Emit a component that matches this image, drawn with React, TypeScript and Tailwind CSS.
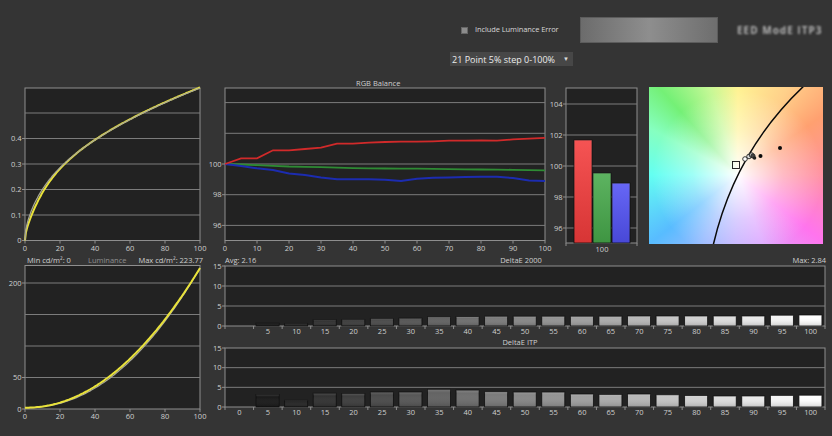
import React from "react";

const FONT = "'Open Sans', 'Noto Sans', sans-serif";
const GRID = "#7c7c7c";
const FRAME = "#8e8e8e";
const PLOT = "#222222";
const LABEL = "#cfcfcf";

const STEPS = Array.from({ length: 21 }, (_, i) => i * 5);

type Pt = [number, number];

function toPath(pts: Pt[]) {
  return pts.map((p, i) => `${i ? "L" : "M"}${p[0].toFixed(1)},${p[1].toFixed(1)}`).join(" ");
}

// shared pieces of every plot: frame, grid lines, tick labels
function Frame({
  x0, x1, y0, y1, grids, yLabels, xLabels, xLabelY, ticksX,
}: {
  x0: number; x1: number; y0: number; y1: number;
  grids: number[];
  yLabels: { y: number; t: string }[];
  xLabels: { x: number; t: string }[];
  xLabelY: number;
  ticksX?: number[];
}) {
  return (
    <g>
      <rect x={x0} y={y0} width={x1 - x0} height={y1 - y0} fill={PLOT} stroke={FRAME} strokeWidth={1} />
      {grids.map((y) => (
        <line key={y} x1={x0} x2={x1} y1={y} y2={y} stroke={GRID} strokeWidth={1} />
      ))}
      {yLabels.map((l) => (
        <g key={l.t}>
          <line x1={x0 - 3} x2={x0} y1={l.y} y2={l.y} stroke={FRAME} />
          <text x={x0 - 3.5} y={l.y + 2.7} textAnchor="end" fontSize={7.5} fill={LABEL}>{l.t}</text>
        </g>
      ))}
      {(ticksX ?? xLabels.map((l) => l.x)).map((x, i) => (
        <line key={i} x1={x} x2={x} y1={y1} y2={y1 + 3} stroke={FRAME} />
      ))}
      {xLabels.map((l) => (
        <text key={l.t} x={l.x} y={xLabelY} textAnchor="middle" fontSize={7.5} fill={LABEL}>{l.t}</text>
      ))}
    </g>
  );
}

const tens = [0, 20, 40, 60, 80, 100];

function GammaChart() {
  const X = (d: number) => 25 + d * 1.75;
  const Y = (v: number) => 240.5 - v * 255;
  const law = (d: number) => 0.6 * Math.pow(d / 100, 0.4545);
  const yellow = (d: number) => law(d) * (1 - 0.45 * Math.exp(-d / 7));
  const gray = (d: number) => law(d) * (1 - 0.22 * Math.exp(-d / 6)) * 0.997;
  const ds = Array.from({ length: 201 }, (_, i) => i / 2);
  return (
    <svg width={212} height={177} viewBox="0 78 212 177" fontFamily={FONT}>
      <Frame
        x0={25} x1={200} y0={88} y1={240.5}
        grids={[0.1, 0.2, 0.3, 0.4, 0.5].map(Y)}
        yLabels={[{ y: Y(0), t: "0" }, { y: Y(0.1), t: "0.1" }, { y: Y(0.2), t: "0.2" }, { y: Y(0.3), t: "0.3" }, { y: Y(0.4), t: "0.4" }]}
        xLabels={tens.map((d) => ({ x: X(d), t: String(d) }))}
        xLabelY={250.5}
      />
      <path d={toPath(ds.map((d) => [X(d), Y(yellow(d))]))} fill="none" stroke="#e9e23a" strokeWidth={2} />
      <path d={toPath(ds.map((d) => [X(d), Y(gray(d))]))} fill="none" stroke="#a8a898" strokeWidth={1.2} />
    </svg>
  );
}

function LuminanceChart() {
  const X = (d: number) => 25 + d * 1.75;
  const Y = (v: number) => 409 - v * 0.63;
  const ds = Array.from({ length: 101 }, (_, i) => i);
  const yellow = (d: number) => 2 + 221.77 * Math.pow(d / 100, 2.05);
  const gray = (d: number) => 2 + 221.77 * Math.pow(d / 100, 2.14);
  return (
    <svg width={212} height={181} viewBox="0 255 212 181" fontFamily={FONT}>
      <text x={27} y={262.5} fontSize={7.5} fill={LABEL}>Min cd/m²: 0</text>
      <text x={88} y={262.5} fontSize={7.5} fill="#8f8f8f">Luminance</text>
      <text x={203} y={262.5} fontSize={7.5} fill={LABEL} textAnchor="end">Max cd/m²: 223.77</text>
      <Frame
        x0={25} x1={200} y0={265.5} y1={409}
        grids={[50, 100, 150, 200].map(Y)}
        yLabels={[{ y: Y(0), t: "0" }, { y: Y(50), t: "50" }, { y: Y(200), t: "200" }]}
        xLabels={tens.map((d) => ({ x: X(d), t: String(d) }))}
        xLabelY={419}
      />
      <path d={toPath(ds.map((d) => [X(d), Y(gray(d))]))} fill="none" stroke="#a8a898" strokeWidth={1.2} />
      <path d={toPath(ds.map((d) => [X(d), Y(yellow(d))]))} fill="none" stroke="#e9e23a" strokeWidth={2} />
    </svg>
  );
}

const RED = [100, 100.37, 100.37, 100.89, 100.89, 100.98, 101.06, 101.32, 101.32, 101.39, 101.43, 101.45, 101.46, 101.48, 101.52, 101.52, 101.54, 101.52, 101.6, 101.65, 101.71];
const GREEN = [100, 99.97, 99.93, 99.88, 99.84, 99.82, 99.8, 99.76, 99.73, 99.72, 99.71, 99.7, 99.7, 99.68, 99.66, 99.65, 99.64, 99.63, 99.62, 99.6, 99.59];
const BLUE = [100, 99.86, 99.72, 99.61, 99.39, 99.28, 99.13, 99.0, 99.0, 99.0, 98.98, 98.9, 99.04, 99.1, 99.12, 99.15, 99.17, 99.17, 99.08, 98.92, 98.9];

function RgbBalance() {
  const X = (d: number) => 225 + d * 3.2;
  const Y = (v: number) => 164 - (v - 100) * 15.35;
  const line = (vals: number[]) => toPath(vals.map((v, i) => [X(STEPS[i]), Y(v)]));
  return (
    <svg width={336} height={177} viewBox="212 78 336 177" fontFamily={FONT} className="overflow-visible">
      <text x={356} y={85.5} fontSize={7.5} fill={LABEL}>RGB Balance</text>
      <Frame
        x0={225} x1={545} y0={88} y1={240.5}
        grids={[104, 102, 100, 98, 96].map(Y)}
        yLabels={[{ y: Y(100), t: "100" }, { y: Y(98), t: "98" }, { y: Y(96), t: "96" }]}
        xLabels={Array.from({ length: 11 }, (_, i) => ({ x: X(i * 10), t: String(i * 10) }))}
        xLabelY={251}
      />
      <path d={line(GREEN)} fill="none" stroke="#2e8b34" strokeWidth={1.8} />
      <path d={line(BLUE)} fill="none" stroke="#1c2cb0" strokeWidth={2} />
      <path d={line(RED)} fill="none" stroke="#d12a2a" strokeWidth={1.8} />
    </svg>
  );
}

function RgbBars() {
  const Y = (v: number) => 166 - (v - 100) * 15.5;
  const bars = [
    { x: 574, v: 101.68, c: "#f43c3c" },
    { x: 593, v: 99.55, c: "#47a94b" },
    { x: 612, v: 98.9, c: "#5252f4" },
  ];
  return (
    <svg width={92} height={177} viewBox="548 78 92 177" fontFamily={FONT}>
      <defs>
        <linearGradient id="barSheen" x1="0" y1="0" x2="0" y2="1">
          <stop offset="0" stopColor="#fff" stopOpacity="0.12" />
          <stop offset="1" stopColor="#000" stopOpacity="0.12" />
        </linearGradient>
      </defs>
      <Frame
        x0={566} x1={637} y0={88} y1={243}
        grids={[104, 102, 100, 98, 96].map(Y)}
        yLabels={[104, 102, 100, 98, 96].map((v) => ({ y: Y(v), t: String(v) }))}
        xLabels={[{ x: 602, t: "100" }]}
        xLabelY={252}
        ticksX={[566, 637]}
      />
      {bars.map((b) => (
        <g key={b.x}>
          <rect x={b.x} y={Y(b.v)} width={18} height={243 - Y(b.v)} fill={b.c} stroke="#111" strokeWidth={0.8} />
          <rect x={b.x} y={Y(b.v)} width={18} height={243 - Y(b.v)} fill="url(#barSheen)" />
        </g>
      ))}
    </svg>
  );
}

function Chromaticity() {
  return (
    <div className="pt-[9px] pl-[9px]">
      <div className="relative w-[174px] h-[157px] bg-[image:radial-gradient(ellipse_farthest-corner_at_51%_56%,#ffffff_0%,#ffffffc8_12%,#ffffff60_36%,#ffffff00_68%),conic-gradient(from_0deg_at_51%_56%,#fff394,#ffd08a_30deg,#ffa070_55deg,#ff92a2_90deg,#ff74ee_128deg,#dca6ff_160deg,#c2b0ff_182deg,#96baff_208deg,#58bcff_232deg,#64fff2_270deg,#86ffc0_298deg,#74f076_318deg,#c6f896_342deg,#fff394_360deg)]">
        <svg className="absolute inset-0" width={174} height={157} viewBox="649 87 174 157">
          <path d="M713,246 Q735,150 806,84" fill="none" stroke="#0a0a0a" strokeWidth={1.5} />
          <rect x={732.5} y={161.5} width={7} height={7} fill="none" stroke="#111" strokeWidth={0.9} />
          <circle cx={745} cy={159} r={2.3} fill="#fff" stroke="#222" strokeWidth={0.9} />
          <circle cx={749} cy={156.5} r={2.3} fill="#ddd" stroke="#222" strokeWidth={0.9} />
          <circle cx={751.5} cy={155} r={2.3} fill="#bbb" stroke="#222" strokeWidth={0.9} />
          <circle cx={753} cy={156} r={2.1} fill="#444" stroke="#222" strokeWidth={0.9} />
          <circle cx={754.5} cy={158} r={1.8} fill="#222" />
          <circle cx={760.5} cy={156} r={2} fill="#0a0a0a" />
          <circle cx={780} cy={148} r={2} fill="#0a0a0a" />
        </svg>
      </div>
    </div>
  );
}

const DE2000 = [0, 0.7, 0.65, 1.6, 1.65, 1.9, 1.95, 2.3, 2.35, 2.45, 2.45, 2.45, 2.45, 2.45, 2.5, 2.5, 2.5, 2.5, 2.5, 2.7, 2.75];
const ITP = [0, 3.2, 1.7, 3.5, 3.45, 3.8, 3.8, 4.5, 4.3, 3.9, 3.8, 3.8, 3.3, 3.2, 3.3, 3.1, 2.9, 2.8, 2.8, 2.95, 3.0];

function shade(i: number) {
  const l = Math.min(255, Math.round(14 + i * 12.1));
  return `rgb(${l},${l},${l})`;
}

function DeltaPlot({ vals, top, bottom, showZero }: { vals: number[]; top: number; bottom: number; showZero: boolean }) {
  const slot = 600 / 21;
  const per = (bottom - top) / 15;
  const Y = (v: number) => bottom - v * per;
  return (
    <g>
      <Frame
        x0={225} x1={825} y0={top} y1={bottom}
        grids={[5, 10].map(Y)}
        yLabels={[0, 5, 10, 15].map((v) => ({ y: Y(v), t: String(v) }))}
        xLabels={STEPS.filter((s) => showZero || s > 0).map((s) => ({ x: 225 + (s / 5 + 0.5) * slot, t: String(s) }))}
        xLabelY={bottom + 8}
        ticksX={Array.from({ length: 22 }, (_, i) => 225 + i * slot)}
      />
      {vals.map((v, i) =>
        v > 0 ? (
          <g key={i}>
            <rect x={225 + i * slot + 2.5} y={Y(v)} width={23} height={bottom - Y(v)} fill={shade(i)} stroke="#0e0e0e" strokeWidth={0.8} />
            <rect x={225 + i * slot + 2.5} y={Y(v)} width={23} height={bottom - Y(v)} fill="url(#deSheen)" />
          </g>
        ) : null
      )}
    </g>
  );
}

function DeltaCharts() {
  return (
    <svg width={620} height={181} viewBox="212 255 620 181" fontFamily={FONT}>
      <defs>
        <linearGradient id="deSheen" x1="0" y1="0" x2="0" y2="1">
          <stop offset="0" stopColor="#fff" stopOpacity="0.14" />
          <stop offset="0.2" stopColor="#fff" stopOpacity="0" />
          <stop offset="1" stopColor="#000" stopOpacity="0.16" />
        </linearGradient>
      </defs>
      <text x={225} y={263} fontSize={7.5} fill={LABEL}>Avg: 2.16</text>
      <text x={521} y={263} fontSize={7.5} fill={LABEL} textAnchor="middle">DeltaE 2000</text>
      <text x={826} y={263} fontSize={7.5} fill={LABEL} textAnchor="end">Max: 2.84</text>
      <DeltaPlot vals={DE2000} top={266} bottom={326} showZero={false} />
      <text x={520} y={345} fontSize={7.5} fill={LABEL} textAnchor="middle">DeltaE ITP</text>
      <DeltaPlot vals={ITP} top={348} bottom={407} showZero={true} />
    </svg>
  );
}

export default function App() {
  return (
    <div className="w-[832px] h-[436px] overflow-hidden bg-[#343434] font-['Open_Sans','Noto_Sans',sans-serif] text-[#d6d6d6]">
      <header className="h-[78px] flex flex-col">
        <div className="mt-[17px] ml-[461px] h-[26px] flex items-center">
          <span className="w-[7px] h-[7px] bg-[#8c8c8c] border border-[#666]" />
          <span className="ml-[7px] w-[105px] text-[7.5px] leading-none tracking-[-0.1px]">Include Luminance Error</span>
          <div className="w-[138px] h-[26px] bg-gradient-to-r from-[#6c6c6c] via-[#8e8e8e] to-[#6e6e6e] border border-[#5c5c5c]" />
          <span className="ml-[19px] text-[10px] font-bold text-[#b4b4b4] blur-[1px] tracking-[1px]">EED ModE ITP3</span>
        </div>
        <div className="mt-[9px] ml-[450px] w-[123px] h-[14px] bg-[#474747] flex items-center justify-between pl-[2px] pr-[4px]">
          <span className="text-[9px] leading-none text-[#ececec]">21 Point 5% step 0-100%</span>
          <span className="text-[6px] leading-none text-[#ddd]">▼</span>
        </div>
      </header>
      <main className="grid grid-cols-[212px_336px_92px_192px] grid-rows-[177px_181px]">
        <GammaChart />
        <RgbBalance />
        <RgbBars />
        <Chromaticity />
        <LuminanceChart />
        <div className="col-span-3">
          <DeltaCharts />
        </div>
      </main>
    </div>
  );
}
